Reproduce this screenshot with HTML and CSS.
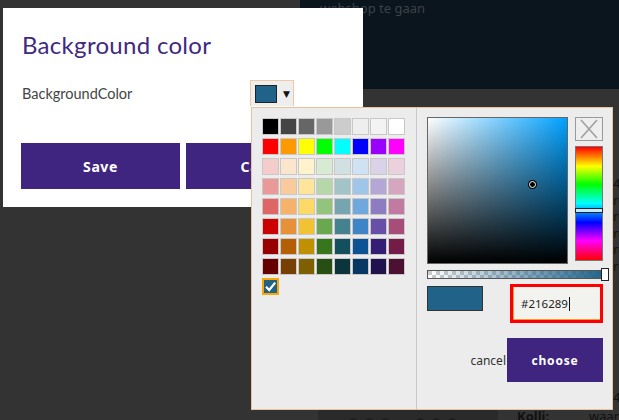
FILE: index.html
```html
<!DOCTYPE html>
<html lang="nl">
<head>
<meta charset="utf-8">
<title>Background color</title>
<link rel="stylesheet" href="styles.css">
</head>
<body>
<div class="page">
  <aside class="side"></aside>
  <main class="main">
    <header class="topbar"><span class="topbar-text">webshop te gaan</span></header>
    <section class="details">
      <div class="detail-lines">
        <div>45 stuks</div>
        <div>rood</div>
        <div>rood</div>
        <div>rood</div>
        <div>rood</div>
        <div>rood</div>
      </div>
      <div class="detail-foot">
        <div class="thumbs"><span class="dot"></span><span class="dot"></span><span class="dot"></span><span class="gapdot"></span><span class="dot"></span><span class="dot"></span><span class="dot"></span></div>
        <div class="foot-right">
          <div class="foot-num">45</div>
          <div class="foot-row"><b>Kolli:</b><span>waarde</span></div>
        </div>
      </div>
    </section>
  </main>
</div>

<div class="modal">
  <h1 class="modal-title">Background color</h1>
  <div class="field-row">
    <span class="field-label">BackgroundColor</span>
    <div class="color-btn"><span class="color-btn-swatch"></span><span class="color-btn-arrow">▼</span></div>
  </div>
  <div class="btn-row">
    <button class="btn">Save</button>
    <button class="btn">Cancel</button>
  </div>
</div>

<div class="picker">
  <div class="palette">
    <div class="swatches">
      <span class="sw" style="background:#000000"></span><span class="sw" style="background:#444444"></span><span class="sw" style="background:#666666"></span><span class="sw" style="background:#999999"></span><span class="sw" style="background:#cccccc"></span><span class="sw" style="background:#eeeeee"></span><span class="sw" style="background:#f3f3f3"></span><span class="sw" style="background:#ffffff"></span>
      <span class="sw" style="background:#ff0000"></span><span class="sw" style="background:#ff9900"></span><span class="sw" style="background:#ffff00"></span><span class="sw" style="background:#00ff00"></span><span class="sw" style="background:#00ffff"></span><span class="sw" style="background:#0000ff"></span><span class="sw" style="background:#9900ff"></span><span class="sw" style="background:#ff00ff"></span>
      <span class="sw" style="background:#f4cccc"></span><span class="sw" style="background:#fce5cd"></span><span class="sw" style="background:#fff2cc"></span><span class="sw" style="background:#d9ead3"></span><span class="sw" style="background:#d0e0e3"></span><span class="sw" style="background:#cfe2f3"></span><span class="sw" style="background:#d9d2e9"></span><span class="sw" style="background:#ead1dc"></span>
      <span class="sw" style="background:#ea9999"></span><span class="sw" style="background:#f9cb9c"></span><span class="sw" style="background:#ffe599"></span><span class="sw" style="background:#b6d7a8"></span><span class="sw" style="background:#a2c4c9"></span><span class="sw" style="background:#9fc5e8"></span><span class="sw" style="background:#b4a7d6"></span><span class="sw" style="background:#d5a6bd"></span>
      <span class="sw" style="background:#e06666"></span><span class="sw" style="background:#f6b26b"></span><span class="sw" style="background:#ffd966"></span><span class="sw" style="background:#93c47d"></span><span class="sw" style="background:#76a5af"></span><span class="sw" style="background:#6fa8dc"></span><span class="sw" style="background:#8e7cc3"></span><span class="sw" style="background:#c27ba0"></span>
      <span class="sw" style="background:#cc0000"></span><span class="sw" style="background:#e69138"></span><span class="sw" style="background:#f1c232"></span><span class="sw" style="background:#6aa84f"></span><span class="sw" style="background:#45818e"></span><span class="sw" style="background:#3d85c6"></span><span class="sw" style="background:#674ea7"></span><span class="sw" style="background:#a64d79"></span>
      <span class="sw" style="background:#990000"></span><span class="sw" style="background:#b45f06"></span><span class="sw" style="background:#bf9000"></span><span class="sw" style="background:#38761d"></span><span class="sw" style="background:#134f5c"></span><span class="sw" style="background:#0b5394"></span><span class="sw" style="background:#351c75"></span><span class="sw" style="background:#741b47"></span>
      <span class="sw" style="background:#660000"></span><span class="sw" style="background:#783f04"></span><span class="sw" style="background:#7f6000"></span><span class="sw" style="background:#274e13"></span><span class="sw" style="background:#0c343d"></span><span class="sw" style="background:#073763"></span><span class="sw" style="background:#20124d"></span><span class="sw" style="background:#4c1130"></span>
      <span class="sw sw-active">
        <svg viewBox="0 0 13 13" width="13" height="13"><path d="M2 6.8 L5.2 10 L11.2 2.6" fill="none" stroke="#fff" stroke-width="2.2"/></svg>
      </span>
    </div>
  </div>
  <div class="chooser">
    <div class="chooser-top">
      <div class="sv-box"><span class="sv-dot"></span></div>
      <div class="side-col">
        <div class="clear-btn">
          <svg viewBox="0 0 26 22" width="26" height="22"><path d="M5 2 L21 20 M21 2 L5 20" stroke="#a0a0a0" stroke-width="1.6" fill="none"/></svg>
        </div>
        <div class="hue-bar"><span class="hue-handle"></span></div>
      </div>
    </div>
    <div class="alpha-bar"><span class="alpha-handle"></span></div>
    <div class="value-row">
      <span class="preview"></span>
      <div class="hex-input"><span>#216289</span><span class="caret"></span></div>
    </div>
    <div class="action-row">
      <span class="cancel-link">cancel</span>
      <button class="choose-btn">choose</button>
    </div>
  </div>
</div>
</body>
</html>
```

FILE: styles.css
```css
* { box-sizing: border-box; }

html, body {
  margin: 0;
  padding: 0;
  height: 100%;
  overflow: hidden;
}

body {
  background: #333333;
  font-family: "Noto Sans", "Open Sans", sans-serif;
  width: 619px;
  height: 420px;
  position: relative;
}

/* ---------- background page ---------- */
.page {
  display: flex;
  height: 420px;
}

.side {
  width: 300px;
  flex-shrink: 0;
  background: #333333;
}

.main {
  flex: 1;
  min-width: 0;
  display: flex;
  flex-direction: column;
  background: #333333;
  overflow: hidden;
}

.topbar {
  height: 89px;
  background: #0a151d;
  padding: 2px 0 0 20px;
}

.topbar-text {
  display: block;
  font-size: 13px;
  line-height: 12px;
  color: #3b4349;
  white-space: nowrap;
}

.details {
  flex: 1;
  display: flex;
  flex-direction: column;
}

.detail-lines {
  padding: 86px 0 0 313px;
  font-size: 13px;
  line-height: 16.5px;
  color: #111;
  white-space: nowrap;
}

.detail-foot {
  margin-top: auto;
  display: flex;
  height: 25px;
}

.thumbs {
  margin: 10px 0 0 18px;
  width: 180px;
  flex-shrink: 0;
  background: #2a2a2a;
  display: flex;
  gap: 5px;
  padding: 13px 0 0 30px;
}

.dot {
  width: 11px;
  height: 11px;
  border-radius: 50%;
  background: #1f1f1f;
}

.gapdot { width: 14px; }

.foot-right {
  flex: 1;
  padding-left: 19px;
  font-size: 13px;
  color: #111;
  white-space: nowrap;
}

.foot-num {
  padding-left: 96px;
  line-height: 12px;
  margin-top: -4px;
}

.foot-row {
  display: flex;
  gap: 40px;
  line-height: 16px;
  margin-top: 5px;
}

/* ---------- modal ---------- */
.modal {
  position: absolute;
  z-index: 2;
  left: 3px;
  top: 8px;
  width: 360px;
  height: 199px;
  background: #ffffff;
  padding: 21px 18px 0 18px;
}

.modal-title {
  margin: 0 0 0 1px;
  font-family: "Lato", "Noto Sans", sans-serif;
  font-size: 24px;
  line-height: 32px;
  font-weight: 400;
  color: #402a80;
  letter-spacing: 0.3px;
}

.field-row {
  display: flex;
  align-items: center;
  margin-top: 19px;
  height: 26px;
}

.field-label {
  width: 229px;
  padding-left: 1px;
  font-family: "Lato", "Noto Sans", sans-serif;
  font-size: 14.5px;
  color: #444444;
}

.color-btn {
  width: 44px;
  height: 26px;
  border: 1px solid #efc8a4;
  border-bottom: none;
  background: #eeeeee;
  display: flex;
  align-items: center;
  padding: 0 0 0 4px;
  gap: 6px;
}

.color-btn-swatch {
  width: 22px;
  height: 18px;
  background: #216289;
  border: 1px solid #222222;
}

.color-btn-arrow {
  font-size: 9px;
  color: #111;
  font-family: "DejaVu Sans", sans-serif;
}

.btn-row {
  display: flex;
  gap: 6px;
  margin-top: 37px;
}

.btn {
  width: 159px;
  height: 46px;
  border: none;
  background: #3f2580;
  color: #ffffff;
  font-family: "Noto Sans", sans-serif;
  font-weight: 700;
  font-size: 14px;
  letter-spacing: 0.6px;
  padding: 0;
}

/* ---------- color picker ---------- */
.picker {
  position: absolute;
  z-index: 3;
  left: 251px;
  top: 107px;
  width: 362px;
  height: 303px;
  background: #ececec;
  border: 1px solid #e9c19c;
  display: flex;
}

.palette {
  width: 165px;
  border-right: 1px solid #c9c9c9;
  padding: 10px 0 0 10px;
}

.swatches {
  display: grid;
  grid-template-columns: repeat(8, 17px);
  grid-auto-rows: 17px;
  column-gap: 1px;
  row-gap: 3px;
}

.sw {
  display: block;
  width: 17px;
  height: 17px;
  border: 1px solid #c8c8c8;
}

.sw-active {
  border: 2px solid #ffa500;
  background: #216289;
  display: flex;
  align-items: center;
  justify-content: center;
}

.chooser {
  flex: 1;
  padding: 9px 0 0 10px;
}

.chooser-top {
  display: flex;
  gap: 7px;
}

.sv-box {
  position: relative;
  width: 141px;
  height: 147px;
  border: 1px solid #666666;
  background:
    linear-gradient(to top, #000000, rgba(0,0,0,0)),
    linear-gradient(to right, #ffffff, rgba(255,255,255,0)),
    #00a1ff;
}

.sv-dot {
  position: absolute;
  left: 101px;
  top: 63px;
  width: 7px;
  height: 7px;
  border-radius: 50%;
  background: #000;
  border: 1.5px solid #fff;
  box-shadow: 0 0 0 1px #000;
}

.side-col {
  display: flex;
  flex-direction: column;
  gap: 5px;
}

.clear-btn {
  width: 28px;
  height: 24px;
  border: 1px solid #9a9a9a;
  background: #eeeeee;
  display: flex;
  align-items: center;
  justify-content: center;
}

.hue-bar {
  position: relative;
  width: 28px;
  height: 115px;
  border: 1px solid #777777;
  background: linear-gradient(to bottom,
    #ff0000 0%, #ffff00 17%, #00ff00 33%, #00ffff 50%,
    #0000ff 67%, #ff00ff 83%, #ff0000 100%);
}

.hue-handle {
  position: absolute;
  left: -1px;
  right: -1px;
  top: 61px;
  height: 5px;
  background: #c5e9ff;
  border: 1px solid #222;
}

.alpha-bar {
  position: relative;
  width: 180px;
  height: 9px;
  margin-top: 6px;
  border: 1px solid #555555;
  background:
    linear-gradient(to right, rgba(33,98,137,0), #216289),
    repeating-conic-gradient(#ffffff 0 25%, #cccccc 0 50%) 0 0 / 8px 8px;
}

.alpha-handle {
  position: absolute;
  right: -3px;
  top: -3px;
  width: 8px;
  height: 13px;
  background: #ffffff;
  border: 1px solid #222;
}

.value-row {
  display: flex;
  justify-content: space-between;
  align-items: flex-start;
  margin-top: 5px;
  width: 176px;
}

.preview {
  margin-top: 2px;
  width: 56px;
  height: 25px;
  background: #216289;
  border: 1px solid #333333;
}

.hex-input {
  width: 93px;
  height: 39px;
  border: 3px solid #ff0000;
  background: #f2f2ee;
  box-shadow: inset 1px -1px 0 #f0a030;
  display: flex;
  align-items: center;
  padding-left: 8px;
  font-family: "Noto Sans", sans-serif;
  font-size: 11.5px;
  color: #222;
}

.caret {
  width: 1px;
  height: 14px;
  background: #111;
  margin-left: 1px;
}

.action-row {
  display: flex;
  justify-content: flex-end;
  align-items: center;
  width: 176px;
  margin-top: 15px;
  gap: 1px;
}

.cancel-link {
  font-size: 12px;
  color: #333;
}

.choose-btn {
  width: 96px;
  height: 44px;
  border: none;
  background: #3f2580;
  color: #fff;
  font-family: "Noto Sans", sans-serif;
  font-weight: 700;
  font-size: 12px;
  letter-spacing: 0.8px;
  padding: 0;
}
```
